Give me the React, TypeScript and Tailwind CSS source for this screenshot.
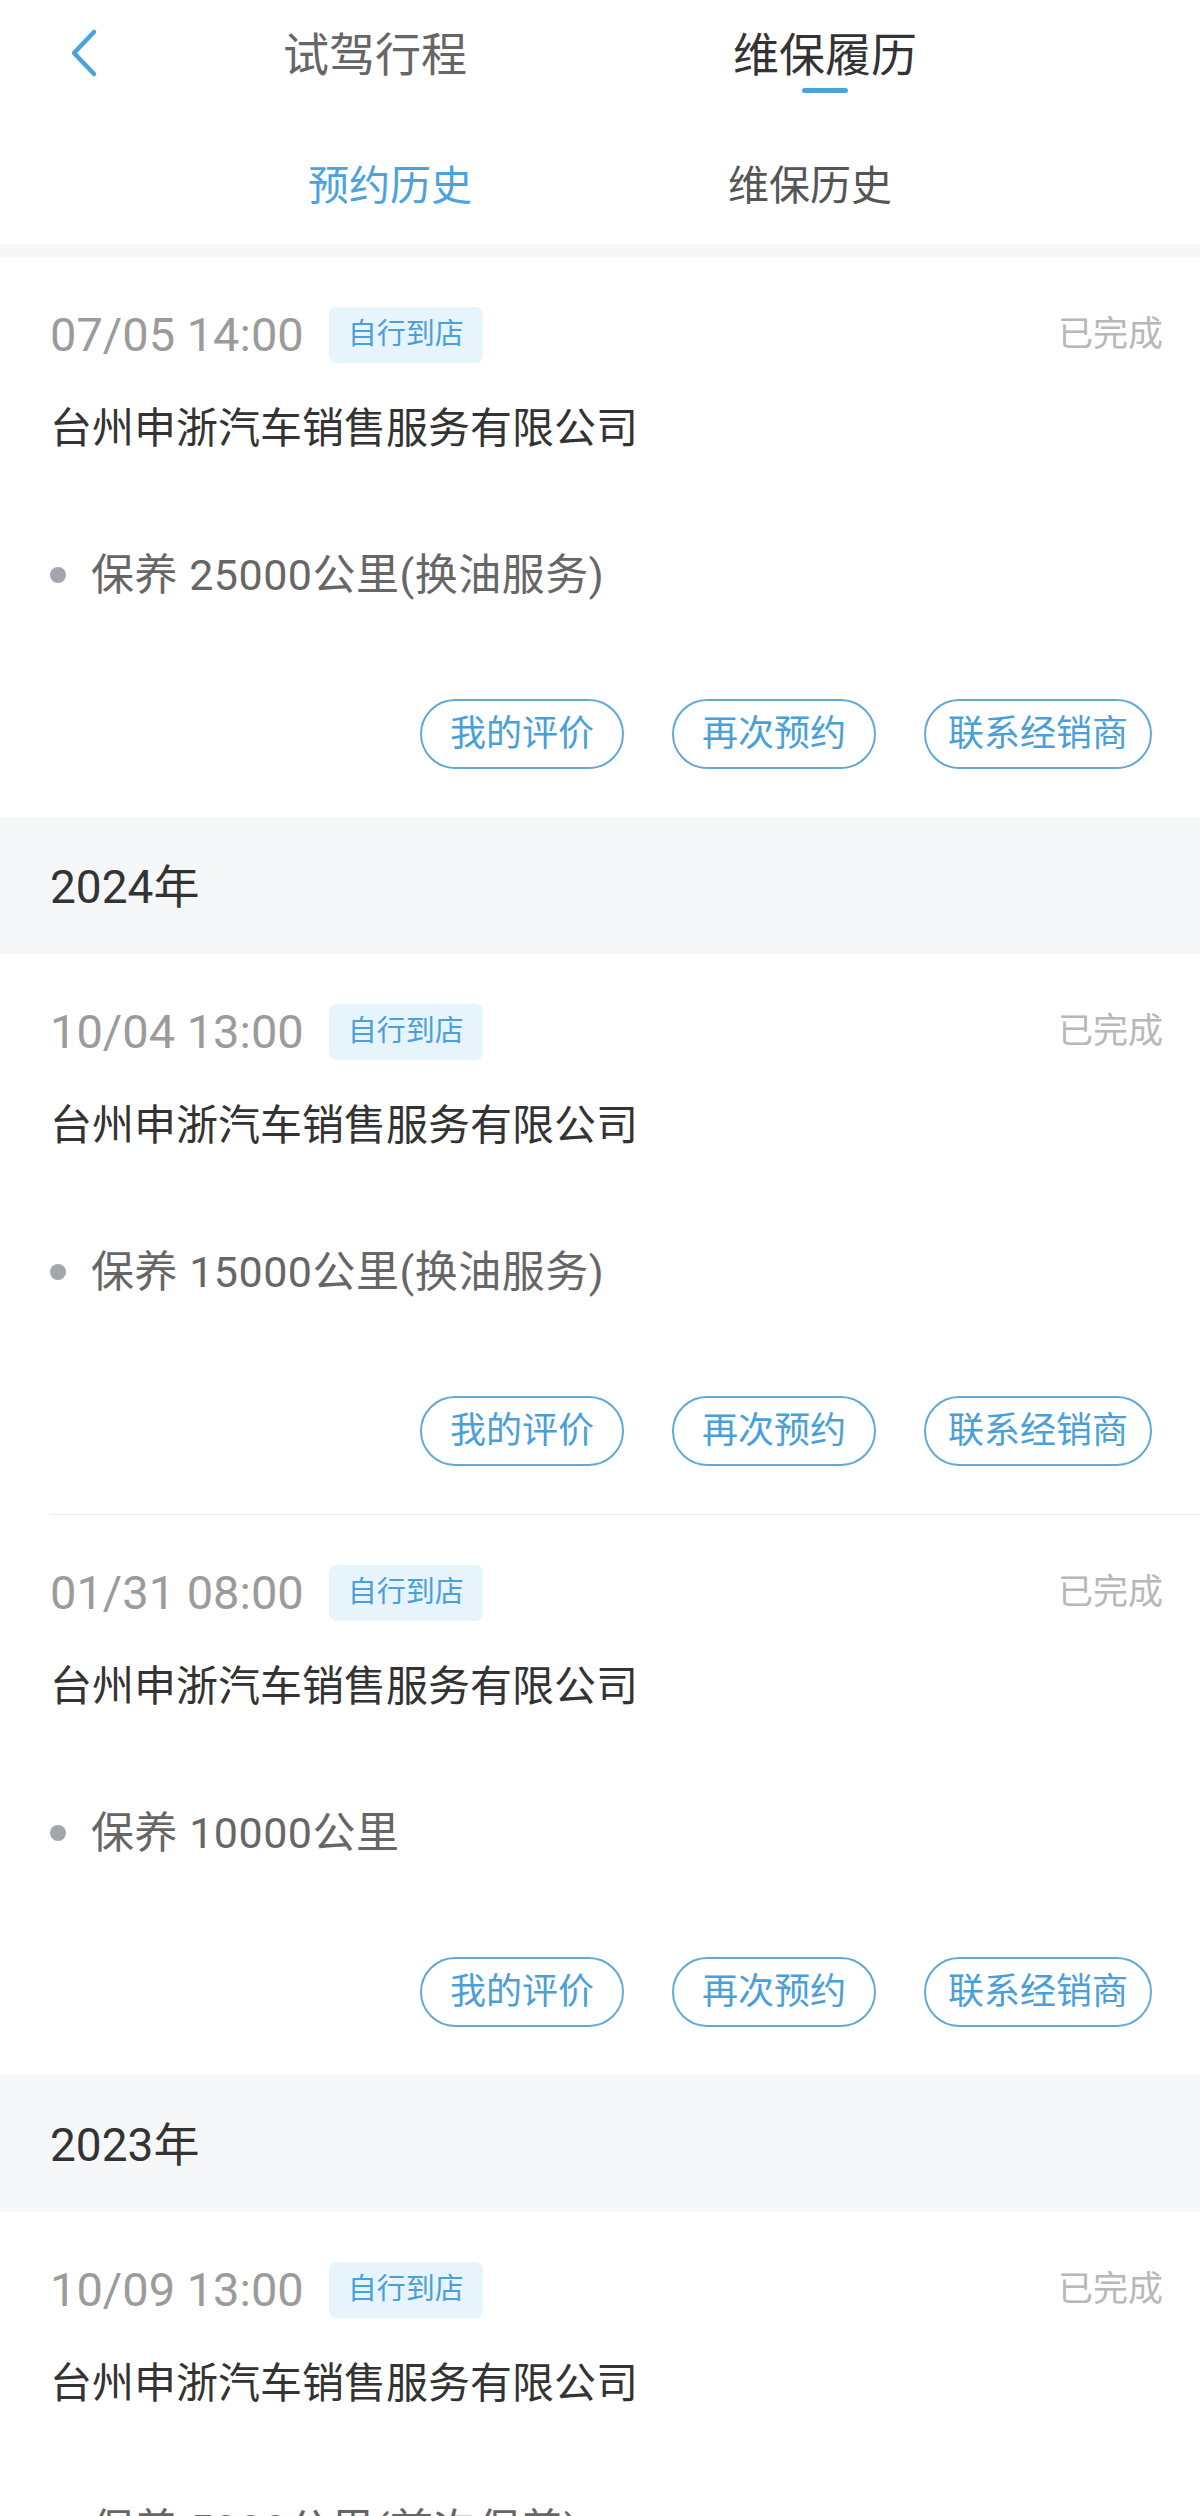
import React from "react";

type Record = { date: string; item: string };
type Group = { year?: string; records: Record[] };

const groups: Group[] = [
  { records: [{ date: "07/05 14:00", item: "保养 25000公里(换油服务)" }] },
  {
    year: "2024年",
    records: [
      { date: "10/04 13:00", item: "保养 15000公里(换油服务)" },
      { date: "01/31 08:00", item: "保养 10000公里" },
    ],
  },
  { year: "2023年", records: [{ date: "10/09 13:00", item: "保养 5000公里(首次保养)" }] },
];

const BackIcon = () => (
  <svg width="30" height="50" viewBox="0 0 30 50" fill="none">
    <path d="M26 4 L6 25 L26 46" stroke="#4aa3df" strokeWidth="4.5" strokeLinecap="round" strokeLinejoin="round" />
  </svg>
);

const RecordCard = ({ record }: { record: Record }) => (
  <div className="bg-white pl-[50px] pt-[50px] pb-[48px]">
    <div className="flex h-[56px] items-center pr-[37px]">
      <span className="text-[47px] leading-[56px] text-[#9b9b9b]">{record.date}</span>
      <span className="ml-[25px] flex h-[56px] w-[154px] items-center justify-center rounded-[8px] bg-[#e7f4fc] text-[29px] text-[#4aa0da]">
        自行到店
      </span>
      <span className="ml-auto text-[35px] text-[#b8b8b8]">已完成</span>
    </div>
    <div className="mt-[38px] text-[42px] leading-[56px] text-[#333333]">台州申浙汽车销售服务有限公司</div>
    <div className="mt-[90px] flex h-[56px] items-center">
      <span className="h-[16px] w-[16px] rounded-full bg-[#a3a7ab]" />
      <span className="ml-[25px] text-[43px] leading-[56px] tracking-[0.5px] text-[#666666]">{record.item}</span>
    </div>
    <div className="mt-[96px] flex justify-end gap-[48px] pr-[48px]">
      {["我的评价", "再次预约", "联系经销商"].map((label, i) => (
        <button
          key={label}
          className={`flex h-[70px] items-center justify-center rounded-full border-2 border-[#62a9d8] text-[36px] text-[#4a9fd8] ${
            i === 2 ? "w-[228px]" : "w-[204px]"
          }`}
        >
          {label}
        </button>
      ))}
    </div>
  </div>
);

export default function App() {
  return (
    <div className="min-h-screen w-[1200px] bg-[#f5f7f9] font-['Roboto','Noto_Sans_CJK_SC',sans-serif]">
      <header className="relative bg-white pt-[27px] pb-[30px]">
        <div className="absolute left-[68px] top-[28px]">
          <BackIcon />
        </div>
        <div className="flex justify-center gap-[264px]">
          <div className="flex w-[186px] flex-col items-center">
            <span className="text-[46px] leading-[56px] text-[#666666]">试驾行程</span>
            <span className="mt-[5px] h-[5px] w-[46px] rounded-full bg-transparent" />
          </div>
          <div className="flex w-[186px] flex-col items-center">
            <span className="text-[46px] leading-[56px] text-[#333333]">维保履历</span>
            <span className="mt-[5px] h-[5px] w-[46px] rounded-full bg-[#4aa3df]" />
          </div>
        </div>
        <div className="mt-[65px] flex justify-center gap-[256px]">
          <span className="w-[164px] text-center text-[41px] leading-[56px] text-[#4aa3df]">预约历史</span>
          <span className="w-[164px] text-center text-[41px] leading-[56px] text-[#555555]">维保历史</span>
        </div>
      </header>

      <main className="mt-[13px]">
        {groups.map((group, gi) => (
          <section key={gi}>
            {group.year && (
              <div className="pl-[50px] pt-[42px] pb-[39px] text-[46px] leading-[56px] text-[#333333]">{group.year}</div>
            )}
            {group.records.map((record, ri) => (
              <div key={record.date}>
                {ri > 0 && (
                  <div className="bg-white pl-[50px]">
                    <div className="h-px bg-[#ececec]" />
                  </div>
                )}
                <RecordCard record={record} />
              </div>
            ))}
          </section>
        ))}
      </main>
    </div>
  );
}
